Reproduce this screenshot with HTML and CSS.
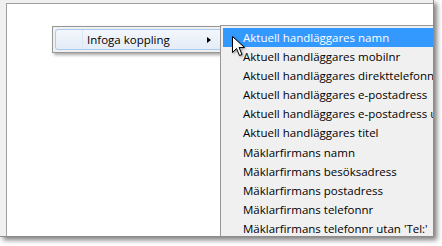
FILE: index.html
```html
<!DOCTYPE html>
<html lang="sv">
<head>
<meta charset="utf-8">
<title>Infoga koppling</title>
<link rel="stylesheet" href="styles.css">
</head>
<body>
<div class="shot">
  <div class="content"></div>
  <div class="menu">
    <div class="menu-item">
      <span class="gutter"></span>
      <span class="label">Infoga koppling</span>
      <span class="arrow"></span>
    </div>
  </div>
  <ul class="sub">
    <li class="sub-item active">Aktuell handläggares namn</li>
    <li class="sub-item">Aktuell handläggares mobilnr</li>
    <li class="sub-item">Aktuell handläggares direkttelefonnr</li>
    <li class="sub-item">Aktuell handläggares e-postadress</li>
    <li class="sub-item">Aktuell handläggares e-postadress utan 'E-post:'</li>
    <li class="sub-item">Aktuell handläggares titel</li>
    <li class="sub-item">Mäklarfirmans namn</li>
    <li class="sub-item">Mäklarfirmans besöksadress</li>
    <li class="sub-item">Mäklarfirmans postadress</li>
    <li class="sub-item">Mäklarfirmans telefonnr</li>
    <li class="sub-item">Mäklarfirmans telefonnr utan 'Tel:'</li>
  </ul>
  <svg class="cursor" width="14" height="21" viewBox="0 0 14 21">
    <path d="M0.5 0.5 L0.5 16.5 L4.5 12.5 L7.5 19.5 L10 18.5 L7 11.5 L12.5 11.5 Z" fill="#fff" stroke="#000" stroke-width="1" stroke-linejoin="miter"/>
  </svg>
</div>
</body>
</html>
```
FILE: styles.css
```css
html, body {
  margin: 0;
  padding: 0;
  background: #fff;
}
body {
  width: 442px;
  height: 246px;
  overflow: hidden;
  font-family: "Open Sans", "Noto Sans", sans-serif;
  font-size: 11.5px;
}
.shot {
  position: relative;
  width: 434px;
  height: 237px;
  box-sizing: border-box;
  background: #f0f0f0;
  border-right: 1px solid #8c8c8c;
  border-bottom: 1px solid #8c8c8c;
  padding: 3px 0 0 6px;
  box-shadow: 3px 3px 5px rgba(0, 0, 0, 0.5);
  overflow: hidden;
}
.content {
  height: 100%;
  box-sizing: border-box;
  background: #fff;
  border-top: 1px solid #a0a0a0;
  border-left: 1px solid #a0a0a0;
}
.menu {
  position: absolute;
  left: 52px;
  top: 26px;
  width: 178px;
  height: 27px;
  box-sizing: border-box;
  border: 1px solid #979797;
  background: #f0f0f0;
  padding: 2px;
  box-shadow: 2px 2px 3px rgba(0, 0, 0, 0.35);
}
.menu-item {
  display: flex;
  align-items: center;
  height: 21px;
  box-sizing: border-box;
  border: 1px solid #a9cbf1;
  border-radius: 3px;
  background: linear-gradient(#f3f7fc, #e4ecf7);
}
.gutter {
  align-self: stretch;
  width: 26px;
  border-right: 1px solid #dbe6f4;
}
.label {
  flex: 1;
  padding-left: 4px;
  color: #000;
}
.arrow {
  width: 0;
  height: 0;
  border-top: 3.5px solid transparent;
  border-bottom: 3.5px solid transparent;
  border-left: 4px solid #000;
  margin-right: 15px;
}
.sub {
  position: absolute;
  left: 220px;
  top: 25px;
  width: 240px;
  margin: 0;
  padding: 2px;
  list-style: none;
  border: 1px solid #979797;
  background: #f0f0f0;
}
.sub-item {
  height: 19.1px;
  line-height: 19.1px;
  padding-left: 20px;
  white-space: nowrap;
  color: #000;
}
.sub-item.active {
  background: #3399ff;
  color: #fff;
}
.cursor {
  position: absolute;
  left: 232px;
  top: 36px;
  filter: drop-shadow(1px 1px 1px rgba(0, 0, 0, 0.4));
}
```
